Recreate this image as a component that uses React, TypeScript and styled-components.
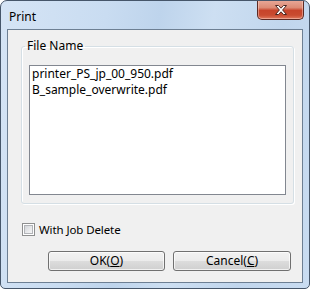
import React from "react";
import styled, { createGlobalStyle } from "styled-components";

const GlobalStyle = createGlobalStyle`
  html, body {
    margin: 0;
    padding: 0;
    background: #ffffff;
  }
  body {
    font-family: "Noto Sans", "Open Sans", sans-serif;
    font-size: 12px;
    color: #000000;
  }
`;

const DialogWindow = styled.div`
  box-sizing: border-box;
  width: 310px;
  height: 289px;
  display: flex;
  flex-direction: column;
  border: 1px solid #46566a;
  border-radius: 7px 7px 5px 5px;
  padding: 0 6px 5px 6px;
  background: linear-gradient(
    100deg,
    #d5e4f5 0%,
    #c9dcf1 30%,
    #bed4ec 45%,
    #cddff2 60%,
    #c1d6ed 80%,
    #c9dcf1 100%
  );
  overflow: hidden;
`;

const TitleBar = styled.div`
  height: 28px;
  display: flex;
  justify-content: space-between;
  align-items: flex-start;
`;

const TitleText = styled.span`
  margin: 9px 0 0 2px;
  font-size: 12px;
  line-height: 14px;
  color: #000000;
`;

const CloseButton = styled.div`
  box-sizing: border-box;
  width: 47px;
  height: 20px;
  margin: -1px -1px 0 0;
  display: flex;
  align-items: center;
  justify-content: center;
  border: 1px solid #5c2a24;
  border-top: none;
  border-radius: 0 0 5px 5px;
  background: linear-gradient(
    180deg,
    #e9aa9a 0%,
    #dc8b75 40%,
    #c7442b 55%,
    #c94b30 80%,
    #e0795e 100%
  );
  box-shadow: inset 0 0 0 1px rgba(255, 220, 210, 0.45);
`;

const ClientArea = styled.div`
  flex: 1;
  display: flex;
  flex-direction: column;
  border: 1px solid #6d7f93;
  background: #f0f0f0;
  padding: 8px 11px 0 13px;
`;

const GroupBox = styled.fieldset`
  margin: 0;
  padding: 11px 7px 8px 7px;
  width: 273px;
  box-sizing: border-box;
  border: 1px solid #d5dfe5;
  border-radius: 3px;
  box-shadow: inset 1px 1px 0 #ffffff, 1px 1px 0 #ffffff;
`;

const GroupLegend = styled.legend`
  margin-left: -4px;
  padding: 0 2px;
  font-size: 12px;
  line-height: 16px;
  color: #000000;
`;

const ListBox = styled.div`
  box-sizing: border-box;
  height: 130px;
  border: 1px solid #828790;
  background: #ffffff;
  padding: 0 1px;
`;

const ListItem = styled.div`
  height: 16px;
  line-height: 16px;
  padding-left: 1px;
  font-size: 12px;
  white-space: nowrap;
`;

const CheckRow = styled.label`
  display: flex;
  align-items: center;
  gap: 4px;
  margin: 17px 0 0 1px;
  height: 16px;
  font-size: 11.5px;
  letter-spacing: -0.1px;
`;

const CheckBoxBox = styled.span`
  box-sizing: border-box;
  width: 13px;
  height: 13px;
  border: 1px solid #8e8f8f;
  padding: 1px;
  background: #ffffff;
  display: flex;
`;

const CheckBoxFill = styled.span`
  flex: 1;
  border: 1px solid #b2b4b8;
  background: linear-gradient(135deg, #d3d5d9 0%, #e9eaec 60%, #f6f6f6 100%);
`;

const ButtonRow = styled.div`
  display: flex;
  justify-content: flex-end;
  gap: 8px;
  margin-top: 14px;
`;

const DialogButton = styled.div<{ $width: number }>`
  box-sizing: border-box;
  width: ${(p) => p.$width}px;
  height: 20px;
  border: 1px solid #707070;
  border-radius: 3px;
  display: flex;
  align-items: center;
  justify-content: center;
  font-size: 12px;
  line-height: 14px;
  background: linear-gradient(
    180deg,
    #f2f2f2 0%,
    #ebebeb 50%,
    #dddddd 50%,
    #cfcfcf 100%
  );
  box-shadow: inset 0 0 0 1px rgba(255, 255, 255, 0.7);
`;

const Mnemonic = styled.span`
  text-decoration: underline;
`;

const CloseGlyph = () => (
  <svg width="14" height="12" viewBox="0 0 14 12">
    <path
      d="M1.5 1.5 L4.5 1.5 L7 4.2 L9.5 1.5 L12.5 1.5 L8.6 6 L12.5 10.5 L9.5 10.5 L7 7.8 L4.5 10.5 L1.5 10.5 L5.4 6 Z"
      fill="#ffffff"
      stroke="#4a2621"
      strokeWidth="1"
      strokeLinejoin="round"
    />
  </svg>
);

const files = ["printer_PS_jp_00_950.pdf", "B_sample_overwrite.pdf"];

const App: React.FC = () => {
  return (
    <>
      <GlobalStyle />
      <DialogWindow>
        <TitleBar>
          <TitleText>Print</TitleText>
          <CloseButton>
            <CloseGlyph />
          </CloseButton>
        </TitleBar>
        <ClientArea>
          <GroupBox>
            <GroupLegend>File Name</GroupLegend>
            <ListBox>
              {files.map((f) => (
                <ListItem key={f}>{f}</ListItem>
              ))}
            </ListBox>
          </GroupBox>
          <CheckRow>
            <CheckBoxBox>
              <CheckBoxFill />
            </CheckBoxBox>
            With Job Delete
          </CheckRow>
          <ButtonRow>
            <DialogButton $width={117}>
              OK(<Mnemonic>O</Mnemonic>)
            </DialogButton>
            <DialogButton $width={118}>
              Cancel(<Mnemonic>C</Mnemonic>)
            </DialogButton>
          </ButtonRow>
        </ClientArea>
      </DialogWindow>
    </>
  );
};

export default App;
